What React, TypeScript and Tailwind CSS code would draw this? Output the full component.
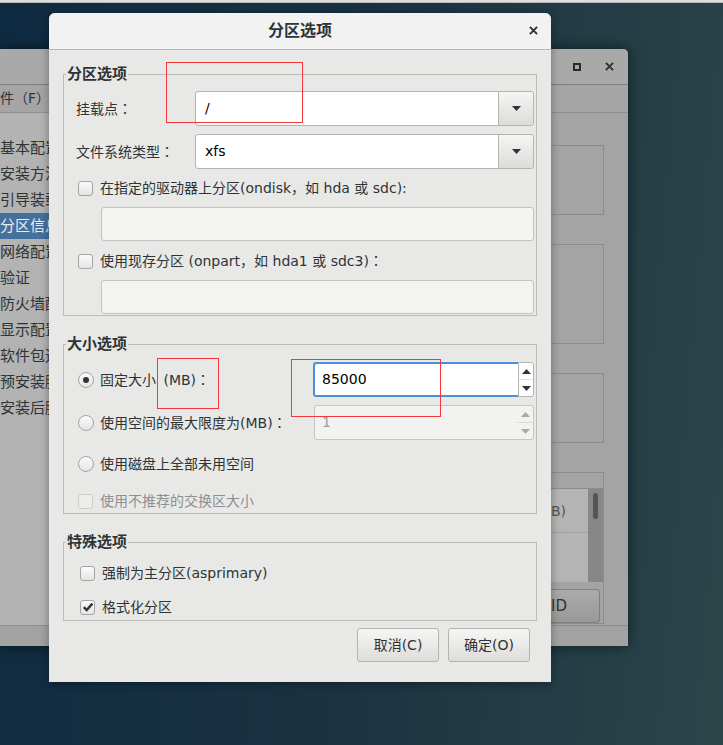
import React from 'react';

const FONT = "font-['DejaVu_Sans','Noto_Sans_CJK_SC',sans-serif]";

// full-width colon drawn centred, as in the reference
function Colon() {
  return <span className="font-['Noto_Sans_CJK_JP',sans-serif]">：</span>;
}

function Down({ color = '#2e3436' }: { color?: string }) {
  return (
    <svg width="9" height="5" viewBox="0 0 9 5">
      <path d="M0 0h9L4.5 5z" fill={color} />
    </svg>
  );
}

function Up({ color = '#2e3436' }: { color?: string }) {
  return (
    <svg width="9" height="5" viewBox="0 0 9 5">
      <path d="M0 5h9L4.5 0z" fill={color} />
    </svg>
  );
}

function Cross({ size = 10 }: { size?: number }) {
  return (
    <svg width={size} height={size} viewBox="0 0 10 10">
      <path d="M1 1L9 9M9 1L1 9" stroke="#2e3436" strokeWidth="2.2" />
    </svg>
  );
}

function Check({ checked, disabled }: { checked?: boolean; disabled?: boolean }) {
  return (
    <span
      className={
        disabled
          ? 'flex h-[15px] w-[15px] shrink-0 items-center justify-center rounded-[3px] border border-[#cdcdcb] bg-[#ededec]'
          : 'flex h-[15px] w-[15px] shrink-0 items-center justify-center rounded-[3px] border border-[#a4a4a2] bg-[linear-gradient(#fbfbfb,#e4e4e3)]'
      }
    >
      {checked && (
        <svg width="12" height="12" viewBox="0 0 12 12">
          <path d="M1.8 6.2L4.7 9L10.4 2.6" stroke="#2e3436" strokeWidth="2.4" fill="none" />
        </svg>
      )}
    </span>
  );
}

function Radio({ checked }: { checked?: boolean }) {
  return (
    <span className="flex h-[16px] w-[16px] shrink-0 items-center justify-center rounded-full border border-[#a4a4a2] bg-[linear-gradient(#fbfbfb,#e4e4e3)]">
      {checked && <span className="h-[6px] w-[6px] rounded-full bg-[#2e3436]" />}
    </span>
  );
}

function Combo({ value }: { value: string }) {
  return (
    <div className="flex h-[35px] flex-1 rounded-[3px] border border-[#b4b4b1]">
      <div className="flex flex-1 items-center rounded-l-[3px] bg-white pl-[9px] text-[14px] text-[#000]">{value}</div>
      <div className="flex w-[35px] items-center justify-center rounded-r-[3px] border-l border-[#b4b4b1] bg-[linear-gradient(#f5f5f4,#dcdcda)]">
        <Down />
      </div>
    </div>
  );
}

function Spin({ value, disabled }: { value: string; disabled?: boolean }) {
  if (disabled) {
    return (
      <div className="ml-auto flex h-[35px] w-[220px] rounded-[3px] border border-[#c6c6c4] bg-[#f2f2f1]">
        <div className="flex flex-1 items-center pl-[7px] text-[14px] text-[#9b9b9b]">{value}</div>
        <div className="flex w-[16px] flex-col">
          <div className="flex flex-1 items-center justify-center border-b border-[#dcdcda]">
            <Up color="#a9a9a7" />
          </div>
          <div className="flex flex-1 items-center justify-center">
            <Down color="#a9a9a7" />
          </div>
        </div>
      </div>
    );
  }
  return (
    <div className="ml-auto flex h-[35px] w-[221px]">
      <div className="flex flex-1 items-center rounded-l-[3px] border border-r-0 border-[#4a90d9] bg-white pl-[8px] text-[14px] text-[#000] shadow-[inset_1px_1px_0_0_#4a90d9,inset_0_-1px_0_0_#4a90d9]">
        {value}
      </div>
      <div className="flex w-[16px] flex-col rounded-r-[3px] border border-[#b4b4b1] bg-white">
        <div className="flex flex-1 items-center justify-center border-b border-[#e2e2e0]">
          <Up />
        </div>
        <div className="flex flex-1 items-center justify-center">
          <Down />
        </div>
      </div>
    </div>
  );
}

function Group({ title, children }: { title: string; children: React.ReactNode }) {
  return (
    <fieldset className="border border-[#bcbcba] px-0">
      <legend className="ml-[2px] px-[1px] text-[15px] font-bold leading-[20px] text-[#2e3436]">{title}</legend>
      <div className="flex flex-col pl-[12px] pr-[2px]">{children}</div>
    </fieldset>
  );
}

function Btn({ label }: { label: string }) {
  return (
    <button className="flex h-[34px] w-[82px] items-center justify-center rounded-[3px] border border-[#b3b3b1] bg-[linear-gradient(#f6f6f5,#dedddb)] text-[14px] text-[#2e3436]">
      {label}
    </button>
  );
}

const sidebar = ['基本配置', '安装方法', '引导装载', '分区信息', '网络配置', '验证', '防火墙配', '显示配置', '软件包选', '预安装脚', '安装后脚'];

function BackWindow() {
  return (
    <div className="absolute left-0 top-[49px] flex h-[597px] w-[628px] flex-col overflow-hidden rounded-tr-[5px] bg-[#a4a4a4] shadow-[0_0_14px_rgba(0,0,0,0.55)]">
      <div className="flex h-[36px] shrink-0 items-center justify-end gap-[24px] border-b border-[#7e7e7e] bg-[#a9a9a9] pr-[14px]">
        <span className="h-[8px] w-[8px] border-2 border-[#2a2a2a]" />
        <Cross size={9} />
      </div>
      <div className="flex h-[28px] shrink-0 items-center border-b border-[#8f8f8f] bg-[#a5a5a5] text-[14px] text-[#2e3436]">
        件（F）
      </div>
      <div className="flex flex-1">
        <div className="flex w-[49px] shrink-0 flex-col bg-[#b3b3b3] pt-[22px]">
          {sidebar.map(s => (
            <div
              key={s}
              className={
                s === '分区信息'
                  ? 'h-[26px] whitespace-nowrap bg-[#45709c] text-[15px] leading-[26px] text-[#e8edf2]'
                  : 'h-[26px] whitespace-nowrap text-[15px] leading-[26px] text-[#2e3436]'
              }
            >
              {s}
            </div>
          ))}
        </div>
        <div className="flex-1" />
        <div className="flex w-[77px] flex-col pr-[24px] pt-[32px]">
          <div className="h-[70px] border-y border-r border-[#8c8c8c]" />
          <div className="mt-[29px] h-[100px] border-y border-r border-[#8c8c8c]" />
          <div className="mt-[29px] h-[70px] border-y border-r border-[#8c8c8c]" />
          <div className="mt-[29px] flex h-[152px] flex-col border-y border-r border-[#8c8c8c]">
            <div className="h-[16px] border-b border-[#8c8c8c]" />
            <div className="flex h-[93px]">
              <div className="flex-1 bg-[#b4b4b4]">
                <div className="h-[44px] border-b border-[#a3a3a3] pt-[12px] text-[14px] leading-[20px] text-[#555]">B)</div>
              </div>
              <div className="flex w-[15px] justify-center bg-[#878787] pt-[4px]">
                <span className="h-[26px] w-[5px] rounded-full bg-[#555]" />
              </div>
            </div>
            <div className="flex flex-1 items-start pr-[3px] pt-[7px]">
              <div className="flex h-[34px] flex-1 items-center rounded-r-[4px] border-y border-r border-[#7f7f7f] bg-[linear-gradient(#ababab,#999)] text-[15px] text-[#333]">
                ID
              </div>
            </div>
          </div>
        </div>
      </div>
      <div className="h-[21px] shrink-0 border-t border-[#8c8c8c] bg-[#a3a3a3]" />
    </div>
  );
}

function Dialog() {
  return (
    <div className="absolute left-[49px] top-[13px] flex h-[669px] w-[502px] flex-col overflow-hidden rounded-t-[6px] bg-[#e8e8e7] shadow-[0_2px_10px_rgba(0,0,0,0.35)]">
      <div className="relative flex h-[37px] shrink-0 items-center justify-center border-b border-[#b6b6b3] bg-[#f2f2f2]">
        <span className="text-[16px] font-bold text-[#2e3436]">分区选项</span>
        <span className="absolute right-[13px] top-[13px]">
          <Cross size={9} />
        </span>
      </div>

      <div className="flex flex-col px-[14px] pt-[14px] text-[14px] text-[#2e3436]">
        <Group title="分区选项">
          <div className="mt-[7px] flex items-center">
            <span className="w-[119px]">挂载点<Colon /></span>
            <Combo value="/" />
          </div>
          <div className="mt-[8px] flex items-center">
            <span className="w-[119px]">文件系统类型<Colon /></span>
            <Combo value="xfs" />
          </div>
          <label className="ml-[2px] mt-[9px] flex h-[20px] items-center gap-[7px]">
            <Check />
            <span>在指定的驱动器上分区(ondisk，如 hda 或 sdc):</span>
          </label>
          <div className="ml-[25px] mt-[9px] h-[34px] rounded-[3px] border border-[#c2c2c0] bg-[#f3f3f2]" />
          <label className="ml-[2px] mt-[10px] flex h-[20px] items-center gap-[7px]">
            <Check />
            <span>使用现存分区 (onpart，如 hda1 或 sdc3)<Colon /></span>
          </label>
          <div className="mb-[1px] ml-[25px] mt-[9px] h-[34px] rounded-[3px] border border-[#c2c2c0] bg-[#f3f3f2]" />
        </Group>

        <div className="mt-[18px]">
          <Group title="大小选项">
            <div className="mt-[8px] flex items-center">
              <label className="ml-[2px] flex items-center gap-[6px]">
                <Radio checked />
                <span>固定大小 <span className="ml-[3px]">(MB)</span><Colon /></span>
              </label>
              <Spin value="85000" />
            </div>
            <div className="mt-[8px] flex items-center">
              <label className="ml-[2px] flex items-center gap-[6px]">
                <Radio />
                <span>使用空间的最大限度为(MB)<Colon /></span>
              </label>
              <Spin value="1" disabled />
            </div>
            <label className="ml-[2px] mt-[14px] flex h-[20px] items-center gap-[6px]">
              <Radio />
              <span>使用磁盘上全部未用空间</span>
            </label>
            <label className="mb-[2px] ml-[2px] mt-[17px] flex h-[20px] items-center gap-[7px] text-[#8d9091]">
              <Check disabled />
              <span>使用不推荐的交换区大小</span>
            </label>
          </Group>
        </div>

        <div className="mt-[18px]">
          <Group title="特殊选项">
            <label className="ml-[4px] mt-[11px] flex h-[20px] items-center gap-[7px]">
              <Check />
              <span>强制为主分区(asprimary)</span>
            </label>
            <label className="mb-[3px] ml-[4px] mt-[14px] flex h-[20px] items-center gap-[7px]">
              <Check checked />
              <span>格式化分区</span>
            </label>
          </Group>
        </div>

        <div className="mt-[7px] flex justify-end gap-[9px] pr-[7px]">
          <Btn label="取消(C)" />
          <Btn label="确定(O)" />
        </div>
      </div>
    </div>
  );
}

export default function App() {
  return (
    <div className={`relative h-[745px] w-[723px] overflow-hidden bg-[linear-gradient(95deg,#0f2b41_0%,#1a3342_50%,#2c4549_100%)] ${FONT}`}>
      <div className="h-[3px] border-b border-[#b9b9b9] bg-[#dedede]" />
      <BackWindow />
      <Dialog />
      {/* annotation boxes */}
      <div className="absolute left-[166px] top-[62px] h-[61px] w-[137px] border border-[#f2383c]" />
      <div className="absolute left-[157px] top-[358px] h-[51px] w-[62px] border border-[#f2383c]" />
      <div className="absolute left-[291px] top-[359px] h-[58px] w-[150px] border border-[#f2383c]" />
    </div>
  );
}
